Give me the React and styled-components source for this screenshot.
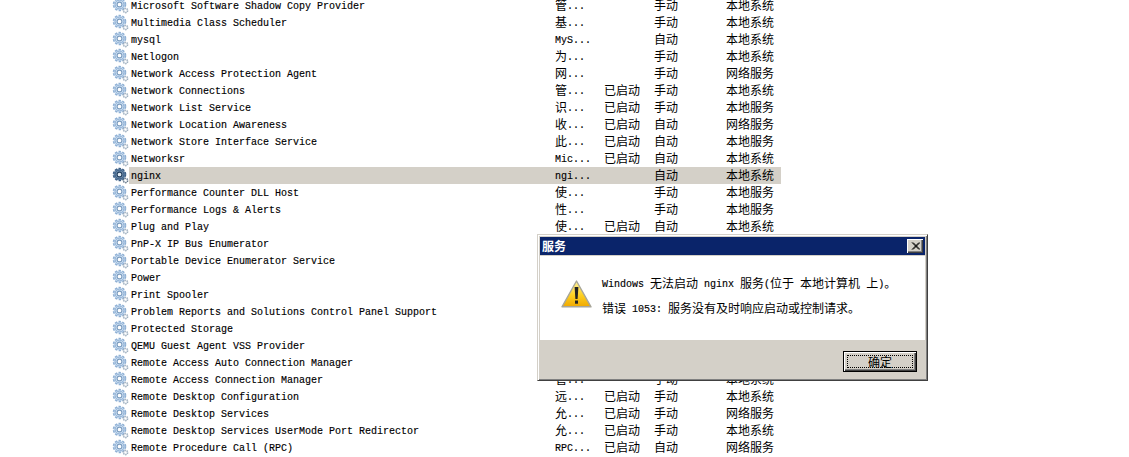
import React from 'react'
import styled, { createGlobalStyle } from 'styled-components'

const GlobalStyle = createGlobalStyle`
  html, body {
    margin: 0;
    background: #fff;
    overflow: hidden;
  }
`

const services = [
  ['Microsoft Software Shadow Copy Provider', '管...', '', '手动', '本地系统'],
  ['Multimedia Class Scheduler', '基...', '', '手动', '本地系统'],
  ['mysql', 'MyS...', '', '自动', '本地系统'],
  ['Netlogon', '为...', '', '手动', '本地系统'],
  ['Network Access Protection Agent', '网...', '', '手动', '网络服务'],
  ['Network Connections', '管...', '已启动', '手动', '本地系统'],
  ['Network List Service', '识...', '已启动', '手动', '本地服务'],
  ['Network Location Awareness', '收...', '已启动', '自动', '网络服务'],
  ['Network Store Interface Service', '此...', '已启动', '自动', '本地服务'],
  ['Networksr', 'Mic...', '已启动', '自动', '本地系统'],
  ['nginx', 'ngi...', '', '自动', '本地系统'],
  ['Performance Counter DLL Host', '使...', '', '手动', '本地服务'],
  ['Performance Logs & Alerts', '性...', '', '手动', '本地服务'],
  ['Plug and Play', '使...', '已启动', '自动', '本地系统'],
  ['PnP-X IP Bus Enumerator', 'Pn...', '', '手动', '本地系统'],
  ['Portable Device Enumerator Service', '强...', '', '手动', '本地系统'],
  ['Power', '管...', '已启动', '自动', '本地系统'],
  ['Print Spooler', '将...', '已启动', '自动', '本地系统'],
  ['Problem Reports and Solutions Control Panel Support', '此...', '', '手动', '本地系统'],
  ['Protected Storage', '为...', '', '手动', '本地系统'],
  ['QEMU Guest Agent VSS Provider', 'QE...', '', '手动', '本地系统'],
  ['Remote Access Auto Connection Manager', '无...', '', '手动', '本地系统'],
  ['Remote Access Connection Manager', '管...', '', '手动', '本地系统'],
  ['Remote Desktop Configuration', '远...', '已启动', '手动', '本地系统'],
  ['Remote Desktop Services', '允...', '已启动', '手动', '网络服务'],
  ['Remote Desktop Services UserMode Port Redirector', '允...', '已启动', '手动', '本地系统'],
  ['Remote Procedure Call (RPC)', 'RPC...', '已启动', '自动', '网络服务'],
]

const Page = styled.div`
  position: relative;
  width: 1129px;
  height: 457px;
  overflow: hidden;
  background: #fff;
  color: #000;
  font: 12px "Noto Sans CJK SC", sans-serif;
`

const List = styled.div`
  display: flex;
  flex-direction: column;
  margin-top: -3px;
  padding-left: 112px;
`

const Row = styled.div`
  display: flex;
  align-items: center;
  height: 17px;
`

const Cells = styled.div`
  display: grid;
  grid-template-columns: 426px 49px 50px 72px 55px;
  align-items: start;
  height: 17px;
  background: ${(p) => (p.$selected ? '#d4d0c8' : 'transparent')};
`

const Cell = styled.div`
  height: 17px;
  line-height: 15px;
  white-space: nowrap;
`

const NameCell = styled(Cell)`
  padding-left: 2px;
`

const Latin = styled.span`
  font-family: "Liberation Mono", monospace;
  font-size: 10px;
  line-height: 1;
  vertical-align: 1px;
  white-space: pre;
  -webkit-text-stroke: 0.15px #000;
`

const GearBox = styled.svg`
  flex: none;
  width: 17px;
  height: 17px;
`

const Dialog = styled.div`
  position: absolute;
  left: 537px;
  top: 234px;
  box-sizing: border-box;
  width: 391px;
  height: 147px;
  display: flex;
  flex-direction: column;
  background: #d4d0c8;
  padding: 2px;
  border: 1px solid;
  border-color: #d4d0c8 #404040 #404040 #d4d0c8;
  box-shadow: inset 1px 1px 0 #fff, inset -1px -1px 0 #808080;
`

const TitleBar = styled.div`
  flex: none;
  display: flex;
  align-items: center;
  justify-content: space-between;
  height: 18px;
  padding: 0 2px 0 2px;
  background: #0a246a;
  color: #fff;
  font-size: 12px;
  font-weight: 700;
  line-height: 18px;
`

const CloseButton = styled.div`
  display: flex;
  align-items: center;
  justify-content: center;
  box-sizing: border-box;
  width: 16px;
  height: 14px;
  background: #d4d0c8;
  box-shadow: inset 1px 1px 0 #fff, inset -1px -1px 0 #404040, inset -2px -2px 0 #808080;
`

const Body = styled.div`
  flex: none;
  display: flex;
  gap: 10px;
  height: 84px;
  box-sizing: border-box;
  padding: 19px 0 0 21px;
  background: #fff;
  margin-top: 1px;
`

const Warning = styled.svg`
  flex: none;
  width: 31px;
  height: 28px;
  margin-top: 5px;
`

const Messages = styled.div`
  display: flex;
  flex-direction: column;
  gap: 8px;
`

const Message = styled.div`
  height: 17px;
  line-height: 15px;
  white-space: nowrap;
`

const Footer = styled.div`
  flex: 1;
  display: flex;
  justify-content: flex-end;
  align-items: flex-start;
  padding: 11px 8px 0 0;
`

const OkButton = styled.div`
  position: relative;
  box-sizing: border-box;
  width: 74px;
  height: 21px;
  display: flex;
  align-items: center;
  justify-content: center;
  border: 1px solid #000;
  background: #d4d0c8;
  line-height: 19px;
  box-shadow: inset 1px 1px 0 #fff, inset -1px -1px 0 #404040, inset -2px -2px 0 #808080;
  &::after {
    content: '';
    position: absolute;
    inset: 3px;
    border: 1px dotted #000;
  }
`

function Mixed({ text }) {
  return text.split(/([\x20-\x7e]+)/).map((part, i) =>
    /[\x20-\x7e]/.test(part) ? <Latin key={i}>{part}</Latin> : part
  )
}

function Gear({ selected }) {
  const rim = selected ? '#3c5f86' : '#8fb0d4'
  const fill = selected ? '#6f8dac' : '#cfe1f4'
  const hole = selected ? '#e4edf5' : '#ffffff'
  const small = selected ? '#5c6f82' : '#9cadbd'
  return (
    <GearBox viewBox="0 0 17 17">
      <circle cx="7.5" cy="7.5" r="6" fill={fill} stroke={rim} strokeWidth="1.6" strokeDasharray="2.4 1.4" />
      <circle cx="7.5" cy="7.5" r="4.4" fill={fill} stroke={rim} strokeWidth="1" />
      <circle cx="7.5" cy="7.5" r="2.4" fill={hole} stroke={selected ? '#24405f' : '#7b9cbf'} strokeWidth="1.1" />
      <circle cx="13.5" cy="13.5" r="2.2" fill="#e6ebf0" stroke={small} strokeWidth="1.4" strokeDasharray="1.3 0.8" />
      <circle cx="13.5" cy="13.5" r="0.8" fill="#fff" />
    </GearBox>
  )
}

function WarningIcon() {
  return (
    <Warning viewBox="0 0 31 28">
      <defs>
        <linearGradient id="warnFill" x1="0" y1="0" x2="0" y2="1">
          <stop offset="0" stopColor="#fff3a0" />
          <stop offset="0.55" stopColor="#fdd022" />
          <stop offset="1" stopColor="#f0a800" />
        </linearGradient>
      </defs>
      <path d="M15.5 1 L30 26.8 H1 Z" fill="url(#warnFill)" stroke="#a8a69a" strokeWidth="1.4" strokeLinejoin="round" />
      <path d="M13.6 7 H17.4 L16.6 19 H14.4 Z" fill="#222" />
      <rect x="14" y="20.5" width="3" height="3.2" fill="#222" />
    </Warning>
  )
}

export default function App() {
  return (
    <Page>
      <GlobalStyle />
      <List>
        {services.map(([name, desc, status, start, account], i) => {
          const selected = name === 'nginx'
          return (
            <Row key={i}>
              <Gear selected={selected} />
              <Cells $selected={selected}>
                <NameCell><Latin>{name}</Latin></NameCell>
                <Cell><Mixed text={desc} /></Cell>
                <Cell>{status}</Cell>
                <Cell>{start}</Cell>
                <Cell>{account}</Cell>
              </Cells>
            </Row>
          )
        })}
      </List>
      <Dialog>
        <TitleBar>
          服务
          <CloseButton>
            <svg width="9" height="8" viewBox="0 0 9 8">
              <path d="M1 0.5 L8 7.5 M2 0.5 L9 7.5 M8 0.5 L1 7.5 M9 0.5 L2 7.5" stroke="#000" strokeWidth="1" />
            </svg>
          </CloseButton>
        </TitleBar>
        <Body>
          <WarningIcon />
          <Messages>
            <Message><Mixed text="Windows 无法启动 nginx 服务(位于 本地计算机 上)。" /></Message>
            <Message><Mixed text="错误 1053: 服务没有及时响应启动或控制请求。" /></Message>
          </Messages>
        </Body>
        <Footer>
          <OkButton>确定</OkButton>
        </Footer>
      </Dialog>
    </Page>
  )
}
